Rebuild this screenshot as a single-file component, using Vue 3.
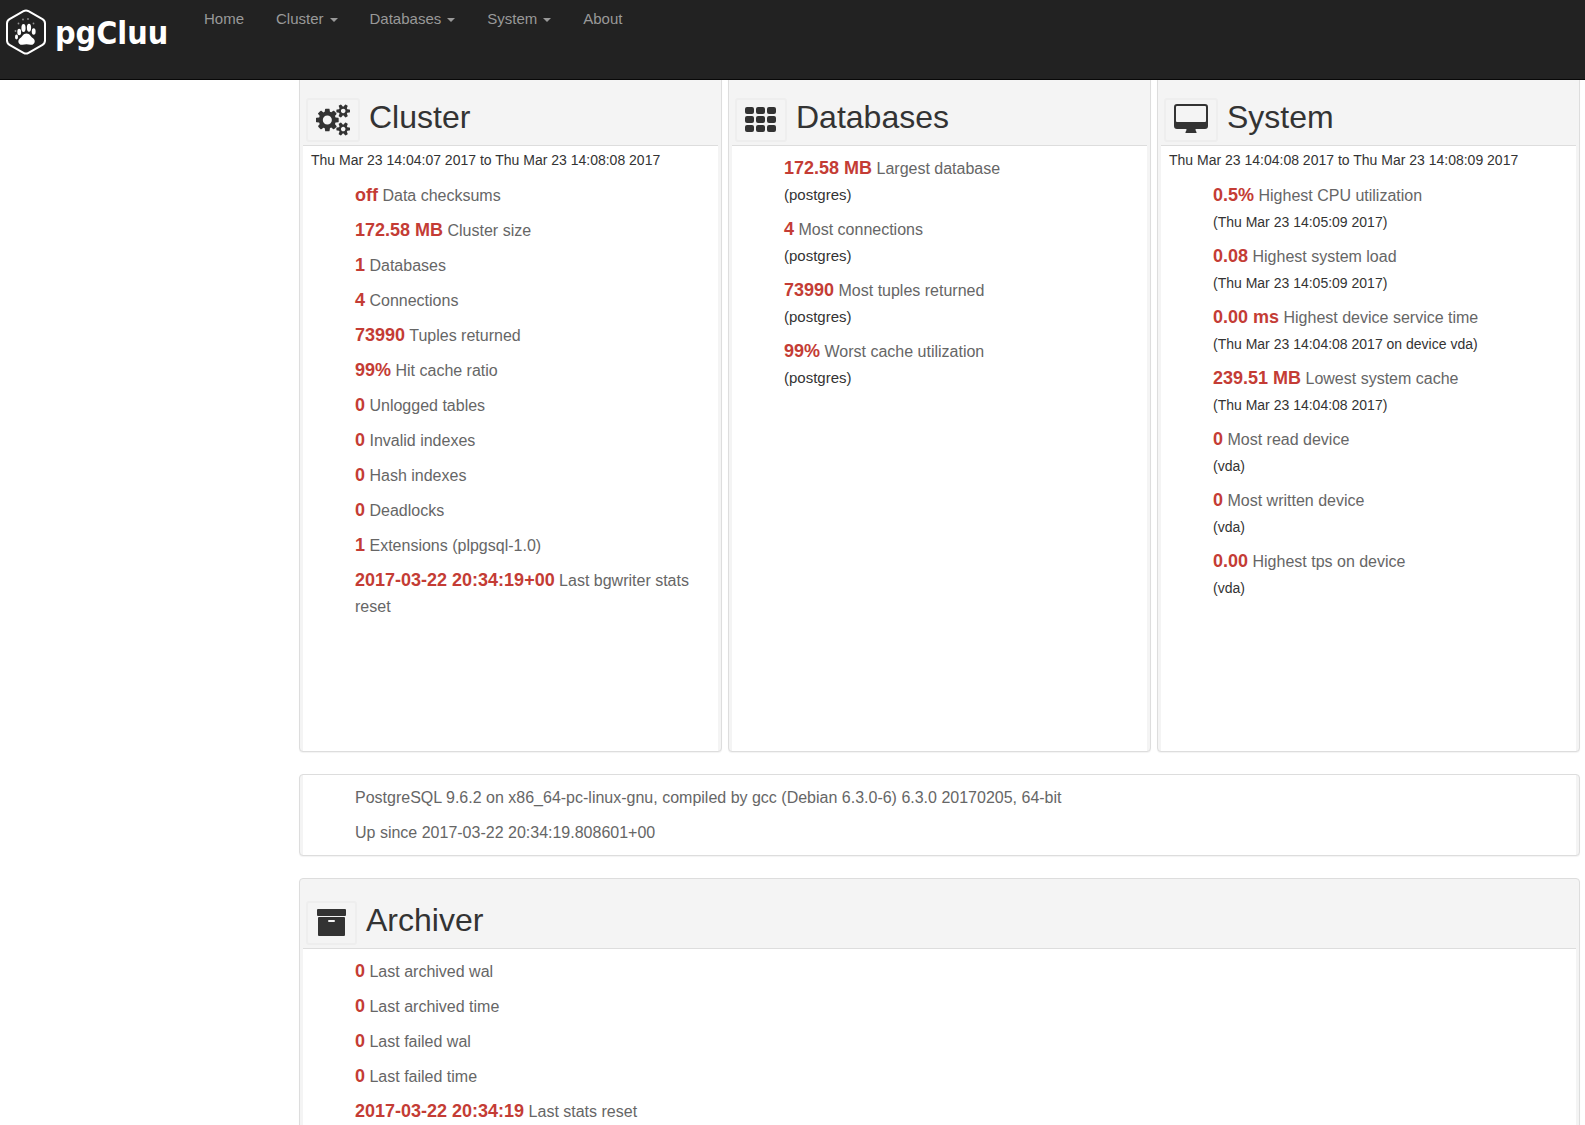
<script setup>
const menu = [
  { label: 'Home' },
  { label: 'Cluster', caret: true },
  { label: 'Databases', caret: true },
  { label: 'System', caret: true },
  { label: 'About' },
]

const panels = [
  {
    id: 'cluster',
    title: 'Cluster',
    period: 'Thu Mar 23 14:04:07 2017 to Thu Mar 23 14:08:08 2017',
    facts: [
      { value: 'off', label: 'Data checksums' },
      { value: '172.58 MB', label: 'Cluster size' },
      { value: '1', label: 'Databases' },
      { value: '4', label: 'Connections' },
      { value: '73990', label: 'Tuples returned' },
      { value: '99%', label: 'Hit cache ratio' },
      { value: '0', label: 'Unlogged tables' },
      { value: '0', label: 'Invalid indexes' },
      { value: '0', label: 'Hash indexes' },
      { value: '0', label: 'Deadlocks' },
      { value: '1', label: 'Extensions (plpgsql-1.0)' },
      { value: '2017-03-22 20:34:19+00', label: 'Last bgwriter stats reset' },
    ],
  },
  {
    id: 'databases',
    title: 'Databases',
    facts: [
      { value: '172.58 MB', label: 'Largest database', note: '(postgres)' },
      { value: '4', label: 'Most connections', note: '(postgres)' },
      { value: '73990', label: 'Most tuples returned', note: '(postgres)' },
      { value: '99%', label: 'Worst cache utilization', note: '(postgres)' },
    ],
  },
  {
    id: 'system',
    title: 'System',
    period: 'Thu Mar 23 14:04:08 2017 to Thu Mar 23 14:08:09 2017',
    facts: [
      { value: '0.5%', label: 'Highest CPU utilization', note: '(Thu Mar 23 14:05:09 2017)' },
      { value: '0.08', label: 'Highest system load', note: '(Thu Mar 23 14:05:09 2017)' },
      { value: '0.00 ms', label: 'Highest device service time', note: '(Thu Mar 23 14:04:08 2017 on device vda)' },
      { value: '239.51 MB', label: 'Lowest system cache', note: '(Thu Mar 23 14:04:08 2017)' },
      { value: '0', label: 'Most read device', note: '(vda)' },
      { value: '0', label: 'Most written device', note: '(vda)' },
      { value: '0.00', label: 'Highest tps on device', note: '(vda)' },
    ],
  },
]

const archiver = [
  { value: '0', label: 'Last archived wal' },
  { value: '0', label: 'Last archived time' },
  { value: '0', label: 'Last failed wal' },
  { value: '0', label: 'Last failed time' },
  { value: '2017-03-22 20:34:19', label: 'Last stats reset' },
]
</script>

<template>
  <header class="navbar">
    <a class="brand" href="#">
      <svg class="brand-mark" viewBox="0 0 42 46" aria-hidden="true">
        <path d="M18.500 2.200Q21 .8 23.500 2.200L37.500 10.200Q40 11.700 40 14.500V31.500Q40 34.300 37.500 35.800L23.500 43.800Q21 45.200 18.500 43.800L4.500 35.800Q2 34.300 2 31.500V14.500Q2 11.700 4.500 10.200Z" fill="none" stroke="#fff" stroke-width="2" />
        <g fill="#fff">
          <path d="M21.500 24.500C25 24.500 25.500 27.500 27.800 29C31.500 31.500 29.500 36.500 25.500 35.800C23 35 20 35 17.500 35.800C13.500 36.500 11.700 31.500 15.300 29C17.600 27.500 18 24.500 21.500 24.500Z" />
          <ellipse cx="18.500" cy="19" rx="2.100" ry="4" />
          <ellipse cx="24" cy="18.800" rx="2.100" ry="4" />
          <ellipse cx="14.200" cy="23" rx="1.900" ry="3.200" />
          <ellipse cx="28.700" cy="22.500" rx="1.900" ry="3.200" />
          <ellipse cx="11.500" cy="28" rx="1.500" ry="2.400" />
          <g opacity=".5">
            <circle cx="18" cy="10.500" r=".9" /><circle cx="23" cy="10" r=".9" />
            <circle cx="13.500" cy="14.500" r=".9" /><circle cx="28.500" cy="14.500" r=".9" />
            <circle cx="10.500" cy="22" r=".9" />
          </g>
        </g>
      </svg>
      <span>pgCluu</span>
    </a>
    <nav>
      <ul class="menu">
        <li v-for="item in menu" :key="item.label">
          <a href="#">{{ item.label }}<span v-if="item.caret" class="caret"></span></a>
        </li>
      </ul>
    </nav>
  </header>

  <main class="content">
    <div class="columns">
      <section v-for="panel in panels" :key="panel.id" class="panel" :class="panel.id">
        <div class="panel-head">
          <span class="icon-box">
            <svg v-if="panel.id === 'cluster'" class="icon" width="34" height="32" viewBox="0 -128 1920 1792" aria-hidden="true">
              <path d="M896 768q0-106-75-181t-181-75-181 75-75 181 75 181 181 75 181-75 75-181zm768 512q0-52-38-90t-90-38-90 38-38 90q0 53 37.500 90.500t90.500 37.500 90.500-37.500 37.500-90.500zm0-1024q0-52-38-90t-90-38-90 38-38 90q0 53 37.500 90.500t90.500 37.500 90.500-37.500 37.500-90.500zm-384 421v185q0 10-7 19.500t-16 10.500l-155 24q-11 35-32 76 34 48 90 115 7 11 7 20 0 12-7 19-23 30-82.500 89.500t-78.500 59.500q-11 0-21-7l-115-90q-37 19-77 31-11 108-23 155-7 24-30 24h-186q-11 0-20-7.500t-10-17.500l-23-153q-34-10-75-31l-118 89q-7 7-20 7-11 0-21-8-144-133-144-160 0-9 7-19 10-14 41-53t47-61q-23-44-35-82l-152-24q-10-1-17-9.500t-7-19.500v-185q0-10 7-19.500t16-10.500l155-24q11-35 32-76-34-48-90-115-7-11-7-20 0-12 7-20 22-30 82-89t79-59q11 0 21 7l115 90q34-18 77-32 11-108 23-154 7-24 30-24h186q11 0 20 7.500t10 17.500l23 153q34 10 75 31l118-89q8-7 20-7 11 0 21 8 144 133 144 160 0 8-7 19-12 16-42 54t-45 60q23 48 34 82l152 23q10 2 17 10.500t7 19.500zm640 533v140q0 16-149 31-12 27-30 52 51 113 51 138 0 4-4 7-122 71-124 71-8 0-46-47t-52-68q-20 2-30 2t-30-2q-14 21-52 68t-46 47q-2 0-124-71-4-3-4-7 0-25 51-138-18-25-30-52-149-15-149-31v-140q0-16 149-31 13-29 30-52-51-113-51-138 0-4 4-7 4-2 35-20t59-34 30-16q8 0 46 46.500t52 67.500q20-2 30-2t30 2q51-71 92-112l6-2q4 0 124 70 4 3 4 7 0 25-51 138 17 23 30 52 149 15 149 31zm0-1024v140q0 16-149 31-12 27-30 52 51 113 51 138 0 4-4 7-122 71-124 71-8 0-46-47t-52-68q-20 2-30 2t-30-2q-14 21-52 68t-46 47q-2 0-124-71-4-3-4-7 0-25 51-138-18-25-30-52-149-15-149-31v-140q0-16 149-31 13-29 30-52-51-113-51-138 0-4 4-7 4-2 35-20t59-34 30-16q8 0 46 46.500t52 67.500q20-2 30-2t30 2q51-71 92-112l6-2q4 0 124 70 4 3 4 7 0 25-51 138 17 23 30 52 149 15 149 31z" />
            </svg>
            <svg v-else-if="panel.id === 'databases'" class="icon" width="32" height="32" viewBox="0 0 32 32" aria-hidden="true">
              <template v-for="y in [3, 12, 21]" :key="y">
                <rect v-for="x in [0, 11, 22]" :key="x" :x="x" :y="y" width="9" height="7" rx="2" />
              </template>
            </svg>
            <svg v-else class="icon" width="34" height="32" viewBox="0 0 34 32" aria-hidden="true">
              <path fill-rule="evenodd" d="M3 0H31Q34 0 34 3V22Q34 25 31 25H21.500Q21.500 27 22.500 28V29H11.500V28Q12.500 27 12.500 25H3Q0 25 0 22V3Q0 0 3 0ZM3 2Q2 2 2 3V17Q2 18 3 18H31Q32 18 32 17V3Q32 2 31 2Z" />
            </svg>
          </span>
          <h2>{{ panel.title }}</h2>
        </div>
        <div class="panel-body">
          <p v-if="panel.period" class="period">{{ panel.period }}</p>
          <ul class="facts">
            <li v-for="fact in panel.facts" :key="fact.label">
              <strong>{{ fact.value }}</strong> {{ fact.label }}
              <small v-if="fact.note">{{ fact.note }}</small>
            </li>
          </ul>
        </div>
      </section>
    </div>

    <section class="panel">
      <div class="panel-body">
        <ul class="facts about">
          <li>PostgreSQL 9.6.2 on x86_64-pc-linux-gnu, compiled by gcc (Debian 6.3.0-6) 6.3.0 20170205, 64-bit</li>
          <li>Up since 2017-03-22 20:34:19.808601+00</li>
        </ul>
      </div>
    </section>

    <section class="panel">
      <div class="panel-head">
        <span class="icon-box">
          <svg class="icon" width="31" height="32" viewBox="0 0 31 32" aria-hidden="true">
            <path fill-rule="evenodd" d="M2 2H29Q30 2 30 3V8Q30 9 29 9H2Q1 9 1 8V3Q1 2 2 2ZM3 10H28Q29 10 29 11V28Q29 29 28 29H3Q2 29 2 28V11Q2 10 3 10ZM13 13Q12 13 12 14T13 15H18Q19 15 19 14T18 13Z" />
          </svg>
        </span>
        <h2>Archiver</h2>
      </div>
      <div class="panel-body">
        <ul class="facts">
          <li v-for="fact in archiver" :key="fact.label">
            <strong>{{ fact.value }}</strong> {{ fact.label }}
          </li>
        </ul>
      </div>
    </section>
  </main>
</template>

<style>
body {
  margin: 0;
  background: #fff;
  color: #333;
  font: 15px/26px "Liberation Sans", Arial, sans-serif;
}
</style>

<style scoped>
.navbar {
  position: fixed;
  inset: 0 0 auto;
  z-index: 10;
  display: flex;
  box-sizing: border-box;
  height: 80px;
  background: #222;
  border-bottom: 1px solid #080808;
}
.brand {
  display: flex;
  align-items: flex-start;
  gap: 8px;
  width: 188px;
  padding: 9px 0 0 5px;
  color: #fff;
  font: bold 32px/48px "DejaVu Sans Condensed", "DejaVu Sans", sans-serif;
  text-decoration: none;
  box-sizing: border-box;
}
.brand-mark {
  width: 42px;
  height: 46px;
}
.menu {
  display: flex;
  margin: 0;
  padding: 0;
  list-style: none;
}
.menu a {
  display: block;
  padding: 6px 16px;
  color: #999;
  text-decoration: none;
}
.caret {
  display: inline-block;
  margin-left: 6px;
  border: 4px solid transparent;
  border-top-color: #999;
  border-bottom: 0;
  vertical-align: middle;
}
.content {
  padding: 75px 5px 0 299px;
}
.columns {
  display: grid;
  grid-template-columns: repeat(3, 1fr);
  gap: 6px;
}
.panel {
  display: flex;
  flex-direction: column;
  padding: 0 3px;
  margin-bottom: 22px;
  background: #f4f4f4;
  border: 1px solid #ddd;
  border-radius: 4px;
  box-shadow: 0 1px 1px rgba(0, 0, 0, 0.05);
}
.columns .panel {
  min-height: 675px;
}
.panel-head {
  display: flex;
  align-items: flex-end;
  gap: 9px;
  height: 66px;
  padding: 0 3px 3px;
  border-bottom: 1px solid #ddd;
}
.icon-box {
  padding: 4px 8px;
  border: 2px solid #eee;
  border-radius: 3px;
}
.icon {
  display: block;
  fill: #333;
}
h2 {
  margin: 0 0 7px;
  font-size: 32px;
  font-weight: 400;
  line-height: 36px;
}
.panel-body {
  flex: 1;
  background: #fff;
}
.period {
  margin: 0;
  padding: 1px 8px 0;
  font-size: 14px;
}
.facts {
  margin: 0;
  padding: 9px 16px 1px 52px;
  list-style: none;
  color: #666;
  font-size: 16px;
}
.facts li {
  min-height: 27px;
  margin-bottom: 8px;
}
.about {
  padding-top: 10px;
  padding-bottom: 0;
}
strong {
  color: #c43c35;
  font-size: 18px;
}
small {
  display: block;
  color: #333;
  font-size: 15px;
}
.system small {
  font-size: 14px;
}
</style>
